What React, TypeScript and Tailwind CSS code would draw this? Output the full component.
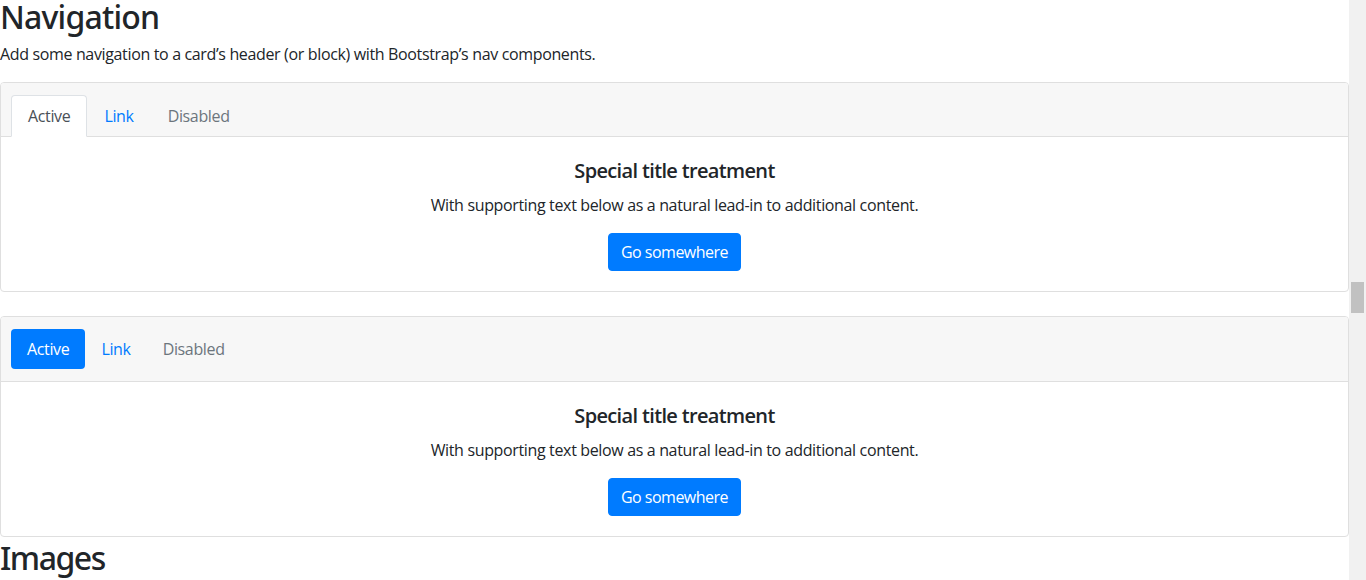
import React from "react";

const font = { fontFamily: '"Open Sans", "Noto Sans", sans-serif' };
const headFont = { fontFamily: '"Noto Sans", "Open Sans", sans-serif' };

function CardBody() {
  return (
    <div className="p-5 text-center">
      <h5 className="mb-[10px] pt-[2px] text-[20px] font-semibold leading-[24px] tracking-[-0.65px] text-[#212529]">Special title treatment</h5>
      <p className="mb-4 text-[16px] leading-[24px] tracking-[-0.35px] text-[#212529]">
        With supporting text below as a natural lead-in to additional content.
      </p>
      <a className="inline-block rounded-[4px] border border-[#007bff] bg-[#007bff] px-3 py-[6px] text-[16px] leading-[24px] tracking-[-0.5px] text-white">
        Go somewhere
      </a>
    </div>
  );
}

export default function App() {
  return (
    <div className="flex h-[580px] w-[1366px] overflow-hidden bg-white text-[#212529]" style={font}>
      <div className="min-w-0 flex-1 overflow-hidden">
        <div className="mt-[-2px]">
          <h2 className="mb-[6px] text-[32px] font-medium leading-[38px] tracking-[-0.8px]" style={headFont}>
            Navigation
          </h2>
          <p className="mb-4 text-[16px] leading-[24px] tracking-[-0.35px]">
            Add some navigation to a card’s header (or block) with Bootstrap’s nav components.
          </p>

          <div className="rounded-[4px] border border-[#dfdfdf]">
            <div className="rounded-t-[3px] border-b border-[#dfdfdf] bg-[#f7f7f7] px-5 pt-3">
              <ul className="-mx-[10px] flex text-[16px] leading-[24px] tracking-[-0.35px]">
                <li className="-mb-px">
                  <span className="block rounded-t-[4px] border border-[#dee2e6] border-b-white bg-white px-4 py-2 text-[#495057]">
                    Active
                  </span>
                </li>
                <li className="-mb-px">
                  <span className="block border border-transparent px-4 py-2 text-[#007bff]">Link</span>
                </li>
                <li className="-mb-px">
                  <span className="block border border-transparent px-4 py-2 text-[#6c757d]">Disabled</span>
                </li>
              </ul>
            </div>
            <CardBody />
          </div>

          <div className="mt-6 rounded-[4px] border border-[#dfdfdf]">
            <div className="rounded-t-[3px] border-b border-[#dfdfdf] bg-[#f7f7f7] px-5 py-3">
              <ul className="-mx-[10px] flex text-[16px] leading-[24px] tracking-[-0.35px]">
                <li>
                  <span className="block rounded-[4px] bg-[#007bff] px-4 py-2 text-white">Active</span>
                </li>
                <li>
                  <span className="block px-4 py-2 text-[#007bff]">Link</span>
                </li>
                <li>
                  <span className="block px-4 py-2 text-[#6c757d]">Disabled</span>
                </li>
              </ul>
            </div>
            <CardBody />
          </div>

          <h2 className="mb-2 pt-[2px] text-[32px] font-medium leading-[38px] tracking-[-1.5px]" style={headFont}>
            Images
          </h2>
        </div>
      </div>
      <div className="w-[17px] shrink-0 bg-[#f1f1f1] pt-[282px]">
        <div className="mx-[2px] h-[31px] bg-[#c1c1c1]" />
      </div>
    </div>
  );
}
